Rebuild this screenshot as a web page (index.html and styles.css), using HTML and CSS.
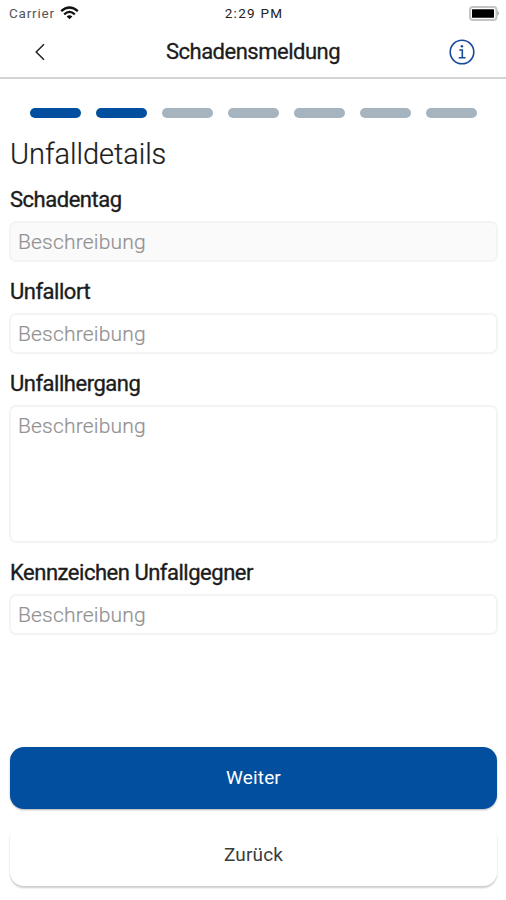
FILE: index.html
```html
<!DOCTYPE html>
<html lang="de">
<head>
<meta charset="utf-8">
<title>Schadensmeldung</title>
<link rel="stylesheet" href="styles.css">
</head>
<body>
<div class="status">
  <div class="carrier"><span>Carrier</span>
    <svg width="19" height="14" viewBox="0 0 19 14" fill="none" stroke="#111" stroke-width="2.3"><path d="M1.2 5.2Q9.5-2.2 17.800 5.200M4.200 8.300Q9.500 3.400 14.800 8.300"/><path d="M9.500 13.300L6.600 10.400Q9.500 8 12.400 10.400Z" fill="#111" stroke="none"/></svg>
  </div>
  <span class="clock">2:29 PM</span>
  <svg class="battery" width="30" height="15" viewBox="0 0 30 15"><rect x="1" y="1" width="26.500" height="13" rx="3" fill="#fff" stroke="#c4c4c4" stroke-width="2"/><rect x="3" y="3.200" width="22" height="8.500" rx=".5" fill="#000"/><path d="M28.300 5Q30 5.500 30 7.300T28.300 9.600Z" fill="#aaa"/></svg>
</div>
<header class="header">
  <svg class="back" width="12" height="18" viewBox="0 0 12 18" fill="none" stroke="#222" stroke-width="1.500"><path d="M10 1.300L2.200 9L10 16.700"/></svg>
  <h1>Schadensmeldung</h1>
  <svg class="info" width="26" height="26" viewBox="0 0 26 26" fill="none" stroke="#174a9c" stroke-width="1.600"><circle cx="13" cy="13" r="11.800"/><path d="M10.300 11H13.300V18.600M9.700 18.700H16.500"/><circle cx="12.900" cy="7.200" r="1.300" fill="#174a9c" stroke="none"/></svg>
</header>
<div class="steps"><i class="done"></i><i class="done"></i><i></i><i></i><i></i><i></i><i></i></div>
<main>
  <h2><span>Unfalldetails</span></h2>
  <section><h3><span>Schadentag</span></h3><div class="field muted"><span>Beschreibung</span></div></section>
  <section><h3><span>Unfallort</span></h3><div class="field"><span>Beschreibung</span></div></section>
  <section><h3><span>Unfallhergang</span></h3><div class="field area"><span>Beschreibung</span></div></section>
  <section><h3><span>Kennzeichen Unfallgegner</span></h3><div class="field"><span>Beschreibung</span></div></section>
  <div class="btn primary"><span>Weiter</span></div>
  <div class="btn plain"><span>Zurück</span></div>
</main>
</body>
</html>
```

FILE: styles.css
```css
* { box-sizing: border-box; }
body { margin: 0; height: 900px; overflow: hidden; background: #fff; color: #1c1c1c; font-family: Roboto, sans-serif; }
svg { display: block; }
h1, h2, h3 { margin: 0; }
.status { height: 26px; display: grid; grid-template-columns: 1fr auto 1fr; align-items: center; padding: 0 7px 0 9px; font-size: 13.5px; }
.carrier { display: flex; align-items: center; gap: 5px; color: #555; letter-spacing: .8px; }
.clock { letter-spacing: 1.25px; color: #222; font-size: 13.5px; }
.battery { justify-self: end; }
.header { height: 53px; border-bottom: 2px solid #d3d3d3; display: grid; grid-template-columns: 1fr auto 1fr; align-items: center; padding: 0 31px 0 34px; }
h1 { font-size: 22px; font-weight: 400; letter-spacing: -.5px; line-height: 28px; padding-top: 1px; margin-left: -3px; -webkit-text-stroke: .3px #1c1c1c; }
.info { justify-self: end; }
.steps { display: flex; gap: 15px; padding: 29px 28px 0 30px; height: 59px; }
.steps i { width: 51px; height: 10px; border-radius: 5px; background: #a6b4c0; flex: none; }
.steps .done { background: #034f9f; }
main { padding: 0 8px 0 9px; }
h2 { font-size: 29px; font-weight: 300; line-height: 33px; padding-left: 1px; height: 48px; letter-spacing: -.05px; -webkit-text-stroke: .2px #1c1c1c; }
h3 { font-size: 22px; font-weight: 400; line-height: 28px; padding-left: 1px; height: 35px; letter-spacing: -.48px; -webkit-text-stroke: .35px #1c1c1c; }
section { margin-bottom: 16px; }
.field { height: 41px; border: 2px solid #f4f4f4; border-radius: 7px; padding: 0 7px; font-size: 21px; line-height: 38px; font-weight: 300; color: #929292; letter-spacing: .18px; -webkit-text-stroke: .2px #929292; }
.muted { background: #fafafa; }
.area { height: 138px; }
.btn { display: flex; align-items: center; justify-content: center; height: 62px; border-radius: 14px; font-size: 19px; letter-spacing: .15px; padding-bottom: 1px; margin: 0 0 0 1px; width: 487px; }
.primary { margin-top: 112px; background: #034f9f; color: #fff; box-shadow: 0 1px 2px rgba(0,0,0,.3); }
.plain { margin-top: 15px; background: #fff; box-shadow: 0 2px 2px rgba(0,0,0,.2); color: #3c3c3c; }
```
